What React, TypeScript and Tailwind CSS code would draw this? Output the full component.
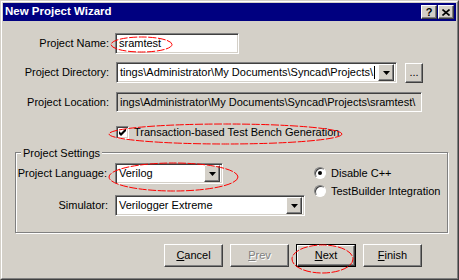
import React from "react";

const font = { fontFamily: '"Liberation Sans", Arial, sans-serif' };

const sunken =
  "border border-t-[#808080] border-l-[#808080] border-r-white border-b-white shadow-[inset_1px_1px_0_#404040,inset_-1px_-1px_0_#d4d0c8]";
const raised =
  "border border-t-white border-l-white border-r-[#404040] border-b-[#404040] shadow-[inset_-1px_-1px_0_#808080,inset_1px_1px_0_#d4d0c8] bg-[#d4d0c8]";

function Arrow() {
  return (
    <div className={`${raised} w-[16px] h-[17px] flex items-center justify-center shrink-0`}>
      <svg width="7" height="4" viewBox="0 0 7 4">
        <path d="M0 0h7L3.5 4z" fill="#000" />
      </svg>
    </div>
  );
}

function Combo({ text, width, caret }: { text: string; width: string; caret?: boolean }) {
  return (
    <div className={`${sunken} ${width} h-[21px] bg-white flex items-center pl-[2px] pr-[2px] overflow-hidden`}>
      <div className="flex-1 overflow-hidden whitespace-nowrap text-[11px] text-black pl-[1px] flex items-center">
        <span>{text}</span>
        {caret && <span className="inline-block w-px h-[13px] bg-black ml-[1px]" />}
      </div>
      <Arrow />
    </div>
  );
}

function Btn({ children, disabled, def }: { children: React.ReactNode; disabled?: boolean; def?: boolean }) {
  const inner = (
    <div
      className={`${raised} ${def ? "w-[58px] h-[21px]" : "w-[59px] h-[23px]"} flex items-center justify-center text-[11px] ${
        disabled ? "text-[#808080] [text-shadow:1px_1px_0_#fff]" : "text-black"
      }`}
    >
      {children}
    </div>
  );
  if (def) return <div className="border border-black w-[60px] h-[23px]">{inner}</div>;
  return inner;
}

export default function App() {
  return (
    <div style={font} className="w-[459px] h-[280px] relative bg-[#d4d0c8] select-none">
      <div className="w-full h-full border border-t-[#d4d0c8] border-l-[#d4d0c8] border-r-[#404040] border-b-[#404040]">
        <div className="w-full h-full border border-t-white border-l-white border-r-[#808080] border-b-[#808080] p-px flex flex-col">
          {/* title bar */}
          <div className="h-[18px] bg-[#000080] flex items-center justify-between pl-[2px] pr-[2px] shrink-0">
            <span className="text-white font-bold text-[11.5px] leading-none">New Project Wizard</span>
            <div className="flex gap-[1px]">
              <div className={`${raised} w-[16px] h-[14px] flex items-center justify-center text-[11px] font-bold leading-none text-black`}>?</div>
              <div className={`${raised} w-[16px] h-[14px] flex items-center justify-center`}>
                <svg width="8" height="7" viewBox="0 0 8 7">
                  <path d="M0.5 0.5L7.5 6.5M7.5 0.5L0.5 6.5" stroke="#000" strokeWidth="1.6" />
                </svg>
              </div>
            </div>
          </div>

          {/* body */}
          <div className="flex flex-col text-[11px] text-black">
            <div className="flex items-center mt-[12px] h-[21px]">
              <div className="w-[106px] text-right">Project Name:</div>
              <div className={`${sunken} ml-[6px] w-[124px] h-[21px] bg-white flex items-center pl-[3px] whitespace-nowrap`}>sramtest</div>
            </div>
            <div className="flex items-center mt-[8px] h-[21px]">
              <div className="w-[106px] text-right">Project Directory:</div>
              <div className="ml-[7px]">
                <Combo text="tings\Administrator\My Documents\Syncad\Projects\" width="w-[281px]" caret />
              </div>
              <div className={`${raised} ml-[8px] w-[18px] h-[20px] flex items-end justify-center pb-[4px] leading-none`}>...</div>
            </div>
            <div className="flex items-center mt-[9px] h-[20px]">
              <div className="w-[106px] text-right">Project Location:</div>
              <div className={`${sunken} ml-[7px] w-[306px] h-[20px] bg-[#d4d0c8] flex items-center pl-[3px] whitespace-nowrap overflow-hidden`}>
                ings\Administrator\My Documents\Syncad\Projects\sramtest\
              </div>
            </div>
            <div className="flex items-center mt-[14px] h-[13px] pl-[113px]">
              <div className={`${sunken} w-[13px] h-[13px] bg-white flex items-center justify-center`}>
                <svg width="7" height="7" viewBox="0 0 7 7">
                  <path d="M0 2v3l2 2l5-5v-3l-5 5z" fill="#000" />
                </svg>
              </div>
              <span className="ml-[5px]">Transaction-based Test Bench Generation</span>
            </div>

            {/* group */}
            <div className="relative mt-[13px] ml-[12px] w-[433px] h-[81px] border border-[#808080] shadow-[inset_1px_1px_0_#fff,1px_1px_0_#fff]">
              <span className="absolute -top-[8px] left-[5px] px-[2px] bg-[#d4d0c8]">Project Settings</span>
              <div className="flex">
                <div className="flex flex-col">
                  <div className="flex items-center mt-[10px] h-[21px]">
                    <div className="w-[91px] text-right">Project Language:</div>
                    <div className="ml-[8px]">
                      <Combo text="Verilog" width="w-[108px]" />
                    </div>
                  </div>
                  <div className="flex items-center mt-[11px] h-[21px]">
                    <div className="w-[92px] text-right">Simulator:</div>
                    <div className="ml-[7px]">
                      <Combo text="Verilogger Extreme" width="w-[190px]" />
                    </div>
                  </div>
                </div>
                <div className="flex flex-col ml-[9px] mt-[14px] gap-[6px]">
                  <div className="flex items-center h-[12px]">
                    <div className="w-[12px] h-[12px] rounded-full bg-white border border-t-[#808080] border-l-[#808080] border-r-white border-b-white shadow-[inset_1px_1px_0_#404040] flex items-center justify-center">
                      <div className="w-[4px] h-[4px] rounded-full bg-black" />
                    </div>
                    <span className="ml-[5px]">Disable C++</span>
                  </div>
                  <div className="flex items-center h-[12px]">
                    <div className="w-[12px] h-[12px] rounded-full bg-white border border-t-[#808080] border-l-[#808080] border-r-white border-b-white shadow-[inset_1px_1px_0_#404040]" />
                    <span className="ml-[5px]">TestBuilder Integration</span>
                  </div>
                </div>
              </div>
            </div>

            {/* buttons */}
            <div className="flex items-center mt-[11px] pl-[161px] gap-[7px]">
              <Btn>
                <span><u>C</u>ancel</span>
              </Btn>
              <Btn disabled>
                <span><u>P</u>rev</span>
              </Btn>
              <Btn def>
                <span><u>N</u>ext</span>
              </Btn>
              <Btn>
                <span><u>F</u>inish</span>
              </Btn>
            </div>
          </div>
        </div>
      </div>

      {/* annotation ellipses */}
      <svg className="absolute inset-0 pointer-events-none" width="459" height="280">
        <g fill="none" stroke="#f00" strokeWidth="1" strokeDasharray="8 1.5">
          <ellipse cx="141.5" cy="44.5" rx="30.5" ry="7.5" />
          <ellipse cx="225.5" cy="134" rx="116.5" ry="10" />
          <ellipse cx="173.5" cy="177" rx="64.5" ry="14" />
          <ellipse cx="322.5" cy="259" rx="30.5" ry="14" />
        </g>
      </svg>
    </div>
  );
}
